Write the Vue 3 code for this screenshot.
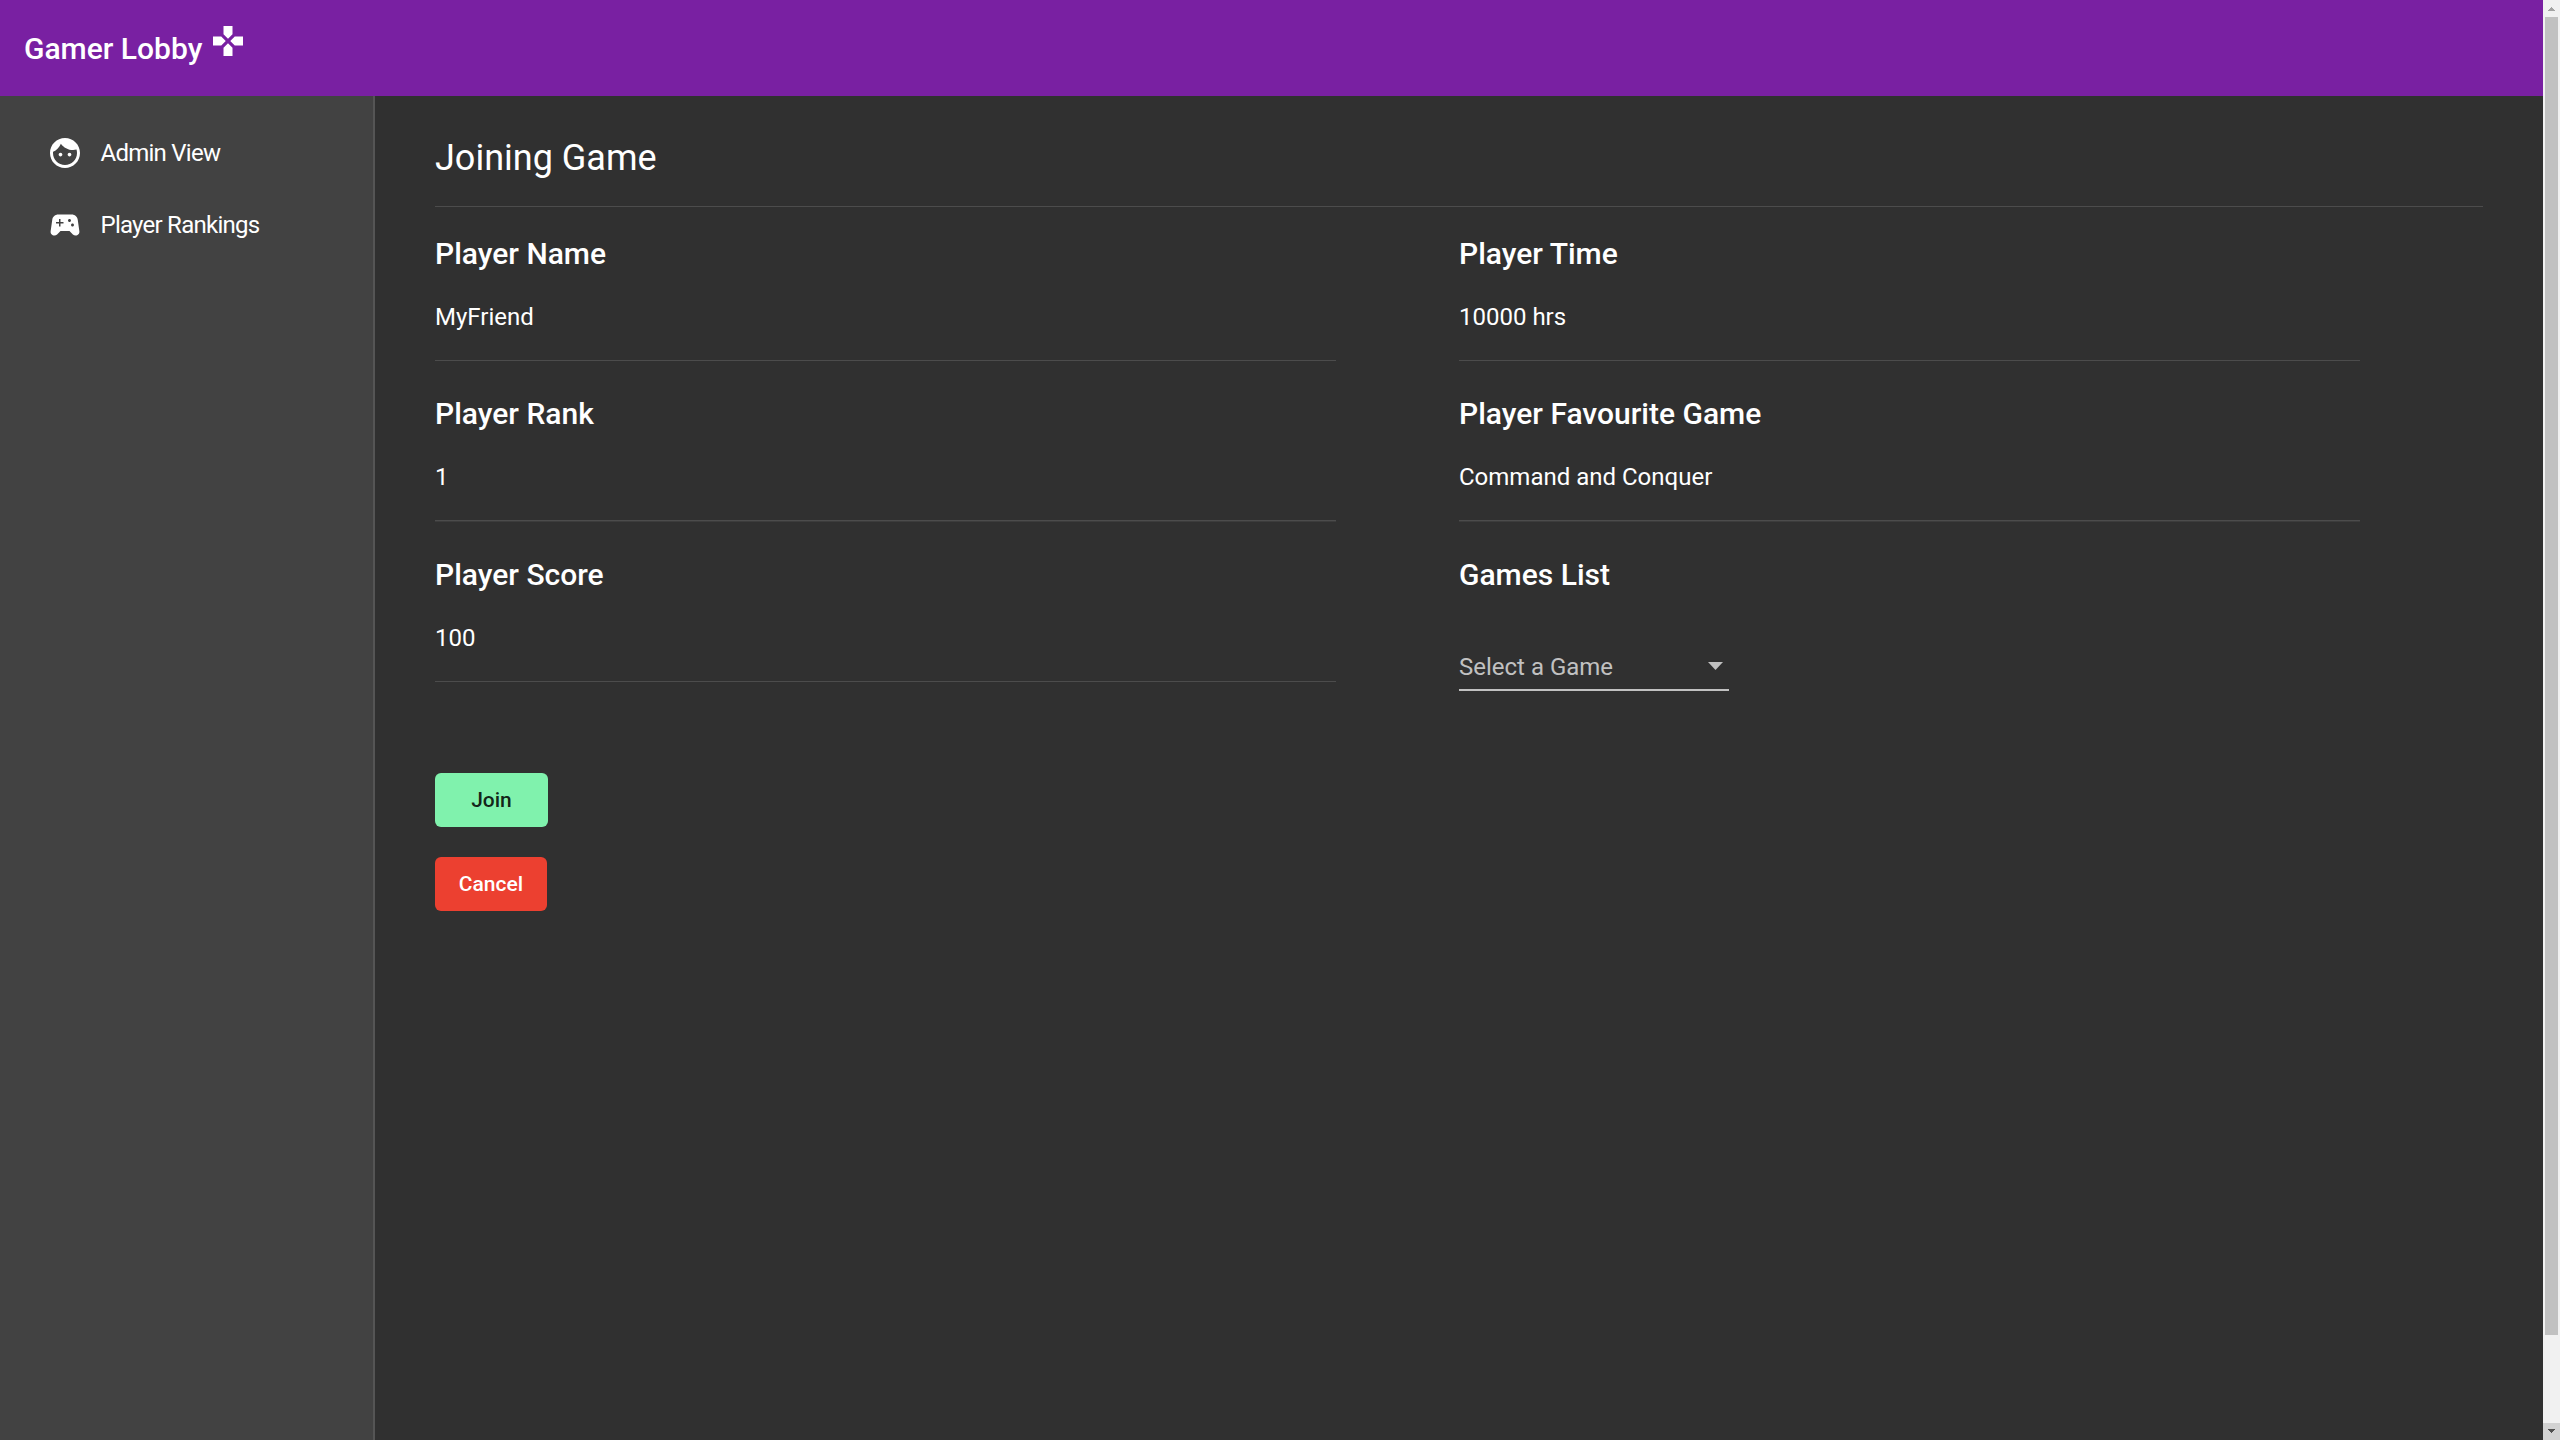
<script setup>
const columns = [
  [
    { label: 'Player Name', value: 'MyFriend' },
    { label: 'Player Rank', value: '1' },
    { label: 'Player Score', value: '100' },
  ],
  [
    { label: 'Player Time', value: '10000 hrs' },
    { label: 'Player Favourite Game', value: 'Command and Conquer' },
  ],
]
</script>

<template>
  <div class="app">
    <div class="page">
      <header class="toolbar">
        <span class="brand">Gamer Lobby</span>
        <svg class="brand-icon" viewBox="0 0 24 24"><path d="M15 7.500V2H9v5.500l3 3 3-3zM7.500 9H2v6h5.500l3-3-3-3zM9 16.500V22h6v-5.500l-3-3-3 3zM16.500 9l-3 3 3 3H22V9h-5.500z" /></svg>
      </header>
      <div class="body">
        <nav class="sidebar">
          <a class="nav-item">
            <svg viewBox="0 0 24 24"><path d="M9 11.750c-.69 0-1.250.56-1.250 1.250s.56 1.250 1.250 1.250 1.250-.56 1.250-1.250-.56-1.250-1.250-1.250zm6 0c-.69 0-1.250.56-1.250 1.250s.56 1.250 1.250 1.250 1.250-.56 1.250-1.250-.56-1.250-1.250-1.250zM12 2C6.480 2 2 6.480 2 12s4.480 10 10 10 10-4.480 10-10S17.520 2 12 2zm0 18c-4.410 0-8-3.590-8-8 0-.29.020-.58.050-.86 2.360-1.050 4.230-2.980 5.210-5.370C11.070 8.330 14.050 10 17.420 10c.78 0 1.530-.09 2.250-.26.210.71.330 1.470.33 2.260 0 4.410-3.590 8-8 8z" /></svg>
            <span>Admin View</span>
          </a>
          <a class="nav-item">
            <svg viewBox="0 0 24 24"><path d="M21.580 16.090l-1.090-7.660C20.210 6.460 18.520 5 16.530 5H7.470C5.480 5 3.790 6.460 3.510 8.430l-1.090 7.660C2.200 17.630 3.390 19 4.940 19c.68 0 1.320-.27 1.800-.75L9 16h6l2.250 2.250c.48.48 1.130.75 1.800.75 1.560 0 2.750-1.370 2.530-2.910zM11 11H9v2H8v-2H6v-1h2V8h1v2h2v1zm4-1c-.55 0-1-.45-1-1s.45-1 1-1 1 .45 1 1-.45 1-1 1zm2 3c-.55 0-1-.45-1-1s.45-1 1-1 1 .45 1 1-.45 1-1 1z" /></svg>
            <span>Player Rankings</span>
          </a>
        </nav>
        <main class="content">
          <h1>Joining Game</h1>
          <div class="columns">
            <div v-for="(col, i) in columns" :key="i" class="column">
              <section v-for="f in col" :key="f.label" class="field">
                <h2>{{ f.label }}</h2>
                <p>{{ f.value }}</p>
              </section>
              <section v-if="i === 1" class="field">
                <h2>Games List</h2>
                <div class="select"><span>Select a Game</span><i class="arrow"></i></div>
              </section>
            </div>
          </div>
          <div class="actions">
            <button class="join">Join</button>
            <button class="cancel">Cancel</button>
          </div>
        </main>
      </div>
    </div>
    <div class="scrollbar">
      <svg class="up" viewBox="0 0 17 17" shape-rendering="crispEdges"><path fill="#a3a3a3" d="M8 7h1v1h1v1h1v1h1v1H5v-1h1V9h1V8h1z" /></svg>
      <div class="thumb"></div>
      <svg class="down" viewBox="0 0 17 17" shape-rendering="crispEdges"><path fill="#505050" d="M5 6h7v1h-1v1h-1v1H9v1H8V9H7V8H6V7H5z" /></svg>
    </div>
  </div>
</template>

<style>
body { margin: 0; overflow: hidden; }
</style>

<style scoped>
* { box-sizing: border-box; }
.app { display: flex; width: 2560px; height: 1440px; background: #303030; color: #fff; font-family: Roboto, "Liberation Sans", sans-serif; }
.page { width: 2543px; display: flex; flex-direction: column; }
.toolbar { height: 96px; background: #7920a2; display: flex; align-items: center; padding-left: 24px; }
.brand { padding-top: 2px; font-size: 30px; font-weight: 500; line-height: 48px; }
.brand-icon { width: 36px; height: 36px; margin: 0 0 14px 8px; fill: #fff; }
.body { flex: 1; display: flex; min-height: 0; }
.sidebar { width: 375px; background: #424242; border-right: 2px solid #555; padding-top: 21px; }
.nav-item { height: 72px; padding-left: 46.500px; display: flex; align-items: center; font-size: 24px; letter-spacing: -.75px; }
.nav-item svg { width: 36px; height: 36px; margin-right: 18px; fill: #fff; }
.content { flex: 1; padding: 0 60px; }
h1 { margin: 0; height: 111px; padding-top: 38px; font-size: 36px; line-height: 48px; font-weight: 400; border-bottom: 1px solid #4c4c4c; }
.columns { display: flex; height: 566px; padding-top: 23px; }
.column { width: 1024px; }
.field { width: 901px; height: 160px; }
.field:nth-child(2) { height: 161px; }
.field:nth-child(2) p { box-shadow: 0 1px #3c3c3c; }
h2 { margin: 0; font-size: 30px; line-height: 48px; font-weight: 500; }
p { margin: 0; height: 83px; padding-top: 21px; font-size: 24px; line-height: 36px; border-bottom: 1px solid #4c4c4c; }
.select { width: 270px; height: 92px; padding: 50px 6px 0 0; display: flex; justify-content: space-between; font-size: 24px; line-height: 36px; color: #c1c1c1; border-bottom: 2px solid #c1c1c1; }
.arrow { width: 15px; height: 8px; margin-top: 13px; background: #c1c1c1; clip-path: polygon(0 0, 100% 0, 50% 100%); }
.actions { display: flex; flex-direction: column; align-items: flex-start; gap: 30px; }
button { height: 54px; padding: 0; border: 0; border-radius: 6px; font: 500 21px/54px Roboto, sans-serif; }
.join { width: 113px; background: #80f2ad; color: rgba(0, 0, 0, .87); }
.cancel { width: 112px; background: #ec4030; color: #fff; }
.scrollbar { width: 17px; display: flex; flex-direction: column; background: #f1f1f1; }
.scrollbar svg { width: 17px; height: 17px; }
.thumb { width: 13px; height: 1318px; margin: 0 2px 88px; background: #c1c1c1; }
.down { background: #d2d2d2; }
</style>
